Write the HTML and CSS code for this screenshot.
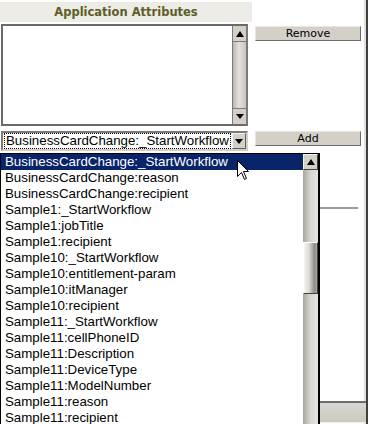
FILE: index.html
```html
<!DOCTYPE html>
<html>
<head>
<meta charset="utf-8">
<link rel="stylesheet" href="styles.css">
</head>
<body>
<div class="screen">
  <div class="left">
    <div class="header">Application Attributes</div>
    <div class="listbox">
      <div class="lb-body"></div>
      <div class="sb">
        <div class="sb-btn"><span class="tri-up"></span></div>
        <div class="sb-track"></div>
        <div class="sb-btn"><span class="tri-down"></span></div>
      </div>
    </div>
    <div class="combo">
      <div class="combo-text"><span class="focus">BusinessCardChange:_StartWorkflow</span></div>
      <div class="combo-btn"><span class="tri-down"></span></div>
    </div>
  </div>
  <div class="right">
    <div class="btn btn-remove">Remove</div>
    <div class="btn btn-add">Add</div>
    <div class="rule"></div>
    <div class="bottombar"></div>
  </div>

  <div class="popup">
    <div class="items">
      <div class="item sel">BusinessCardChange:_StartWorkflow</div>
      <div class="item">BusinessCardChange:reason</div>
      <div class="item">BusinessCardChange:recipient</div>
      <div class="item">Sample1:_StartWorkflow</div>
      <div class="item">Sample1:jobTitle</div>
      <div class="item">Sample1:recipient</div>
      <div class="item">Sample10:_StartWorkflow</div>
      <div class="item">Sample10:entitlement-param</div>
      <div class="item">Sample10:itManager</div>
      <div class="item">Sample10:recipient</div>
      <div class="item">Sample11:_StartWorkflow</div>
      <div class="item">Sample11:cellPhoneID</div>
      <div class="item">Sample11:Description</div>
      <div class="item">Sample11:DeviceType</div>
      <div class="item">Sample11:ModelNumber</div>
      <div class="item">Sample11:reason</div>
      <div class="item">Sample11:recipient</div>
    </div>
    <div class="psb">
      <div class="psb-btn"><span class="tri-up"></span></div>
      <div class="psb-track top"></div>
      <div class="psb-thumb"></div>
      <div class="psb-track"></div>
    </div>
  </div>

  <svg class="cursor" width="13" height="21" viewBox="0 0 13 21">
    <polygon points="0.5,0.5 0.5,16.5 4.5,12.5 7.5,19.5 9.5,18.5 6.5,11.5 11.5,11.5" fill="#fff" stroke="#000" stroke-width="1"/>
  </svg>
</div>
</body>
</html>
```

FILE: styles.css
```css
html, body {
  margin: 0;
  padding: 0;
  background: #fff;
}
.screen {
  position: relative;
  width: 368px;
  height: 424px;
  overflow: hidden;
  display: flex;
  font-family: "Liberation Sans", Arial, sans-serif;
}
.left {
  width: 252px;
  padding-top: 2px;
  display: flex;
  flex-direction: column;
}
.header {
  height: 20px;
  background: #ecebe5;
  color: #5d5d27;
  font-family: "DejaVu Sans", Verdana, sans-serif;
  font-weight: bold;
  font-size: 11.5px;
  line-height: 20px;
  text-align: center;
  margin-bottom: 2px;
}
.listbox {
  margin-left: 1px;
  width: 243px;
  height: 98px;
  border: 2px solid #6a6a6a;
  border-right-color: #7a7a7a;
  display: flex;
  background: #fff;
}
.lb-body { flex: 1; }
.sb {
  width: 13px;
  display: flex;
  flex-direction: column;
  border-left: 1px solid #7a7a7a;
}
.sb-btn {
  height: 15px;
  background: #d4d0c8;
  display: flex;
  align-items: center;
  justify-content: center;
}
.sb-btn:first-child { border-bottom: 1px solid #7a7a7a; }
.sb-btn:last-child { border-top: 1px solid #7a7a7a; }
.sb-track {
  flex: 1;
  background: linear-gradient(to right, #b9b6ae, #e4e2dc 45%, #c9c6be);
}
.tri-up {
  width: 0; height: 0;
  border-left: 4px solid transparent;
  border-right: 4px solid transparent;
  border-bottom: 6px solid #000;
}
.tri-down {
  width: 0; height: 0;
  border-left: 4px solid transparent;
  border-right: 4px solid transparent;
  border-top: 5px solid #000;
}
.combo {
  margin-top: 5px;
  margin-left: 1px;
  width: 243px;
  height: 16px;
  border: 2px solid #7a7a7a;
  border-right-color: #d4d0c8;
  border-bottom-color: #d4d0c8;
  background: #fff;
  display: flex;
}
.combo-text {
  flex: 1;
  padding: 0 1px;
  display: flex;
  align-items: center;
}
.focus {
  border: 1px dotted #000;
  font-size: 13.3px;
  line-height: 14px;
  padding: 0 1px 0 1px;
  color: #000;
  flex: 1;
  white-space: nowrap;
  overflow: hidden;
}
.combo-btn {
  width: 15px;
  background: #d4d0c8;
  border: 1px solid;
  border-color: #f4f3ee #606060 #606060 #f4f3ee;
  box-sizing: border-box;
  display: flex;
  align-items: center;
  justify-content: center;
}
.right {
  width: 109px;
  padding-left: 3px;
  padding-right: 2px;
  border-right: 2px solid #404040;
  box-shadow: inset -2px 0 0 #e2e0da;
  display: flex;
  flex-direction: column;
}
.btn {
  height: 13px;
  width: 104px;
  background: #d4d0c8;
  border: 1px solid;
  border-color: #e8e6e0 #6b6b6b #6b6b6b #e8e6e0;
  font-family: "DejaVu Sans", Verdana, sans-serif;
  font-size: 11px;
  line-height: 13px;
  text-align: center;
  color: #000;
}
.btn-remove { margin-top: 26px; }
.btn-add { margin-top: 90px; }
.rule {
  margin-top: 61px;
  margin-right: 6px;
  height: 2px;
  background: #9a9a9a;
}
.bottombar {
  margin-top: 192px;
  margin-left: -3px;
  margin-right: -2px;
  height: 19px;
  border-top: 2px solid #6d6d6d;
  border-bottom: 1px solid #f0efea;
  background: linear-gradient(#d9d6cf, #cdcac2);
}
.popup {
  position: absolute;
  left: 0;
  top: 153px;
  width: 318px;
  height: 290px;
  border: 1px solid #000;
  background: #fff;
  display: flex;
}
.items {
  flex: 1;
}
.item {
  height: 16px;
  line-height: 16px;
  font-size: 13.3px;
  padding-left: 4px;
  color: #000;
  white-space: nowrap;
}
.item.sel {
  background: #0a246a;
  color: #fff;
}
.psb {
  width: 15px;
  display: flex;
  flex-direction: column;
  border-right: 1px solid #000;
}
.psb-btn {
  height: 14px;
  background: #d4d0c8;
  border: 1px solid;
  border-color: #f4f3ee #404040 #404040 #f4f3ee;
  display: flex;
  align-items: center;
  justify-content: center;
}
.psb-track {
  flex: 1;
  background: linear-gradient(to right, #a9a69e, #d8d6cf 50%, #e6e4de);
}
.psb-track.top {
  flex: none;
  height: 72px;
}
.psb-thumb {
  height: 50px;
  border: 1px solid;
  border-color: #ffffff #404040 #404040 #ffffff;
  background: linear-gradient(to right, #f6f5f1, #dcdad4 40%, #8f8d86 80%, #a9a7a0);
}
.cursor {
  position: absolute;
  left: 237px;
  top: 160px;
}
```
